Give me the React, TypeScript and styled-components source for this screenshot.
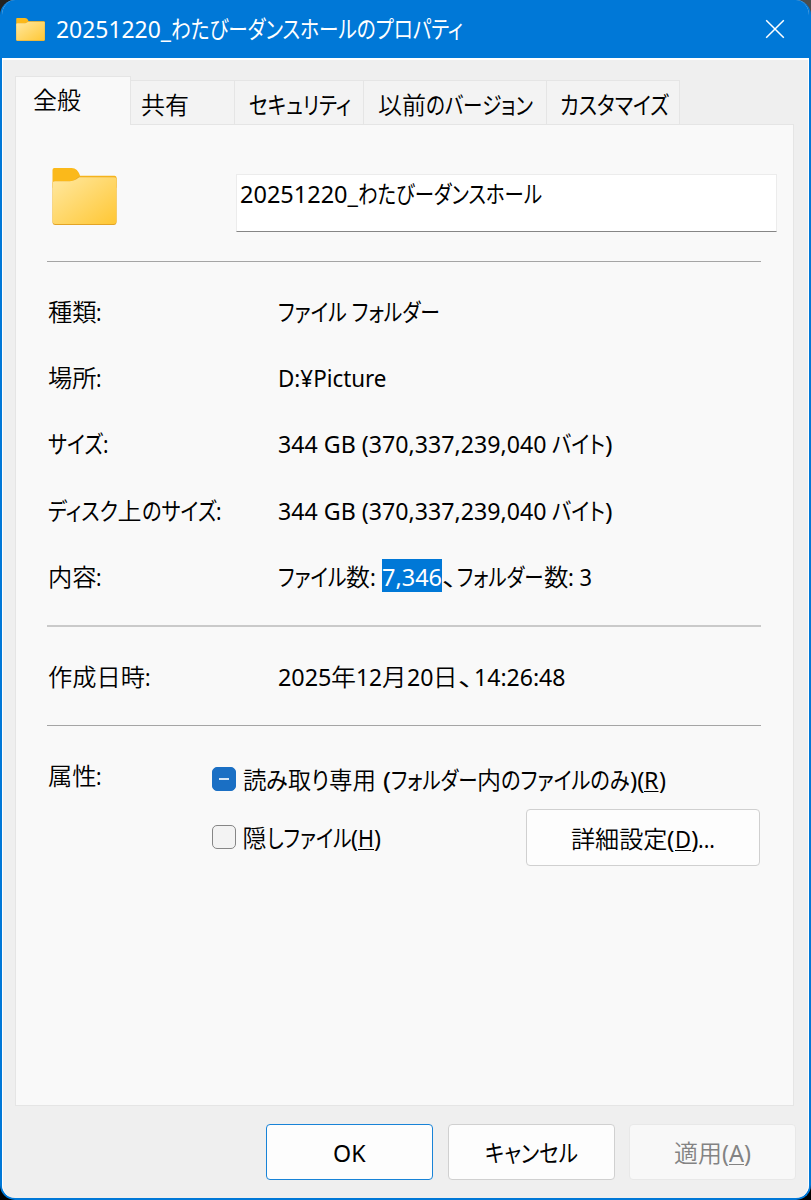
import React, { useLayoutEffect, useRef, useState } from "react";
import styled, { createGlobalStyle, css } from "styled-components";

const GlobalStyle = createGlobalStyle`
  * { box-sizing: border-box; }
  body {
    margin: 0;
    background:
      linear-gradient(to bottom, transparent 50%, #000 50%),
      linear-gradient(to right, #222 50%, #4c4c4c 50%);
    font-family: "Noto Sans", "Noto Sans CJK JP", sans-serif;
    font-size: 24px;
    line-height: 33px;
    color: #000;
  }
`;

/* ---------- text ---------- */

const RunBox = styled.span<{ $width: number; $selected?: boolean }>`
  display: inline-block;
  width: ${(p) => p.$width}px;
  height: 33px;
  line-height: 35px;
  vertical-align: top;
  white-space: pre;
  ${(p) => p.$selected && css`background: #0078d7; color: #fff;`}
`;

const RunText = styled.span<{ $regular: boolean; $underline?: boolean }>`
  display: inline-block;
  transform-origin: 0 50%;
  font-feature-settings: "palt";
  font-weight: ${(p) => (p.$regular ? 400 : 350)};
  ${(p) => p.$underline && css`
    text-decoration: underline;
    text-decoration-thickness: 1px;
    text-decoration-skip-ink: none;
    text-underline-offset: 2px;
  `}
`;

const Line = styled.span`
  display: inline-flex;
  height: 33px;
  white-space: pre;
`;

type Flag = "selected" | "underline";
type Segment = [text: string, width: number, flag?: Flag];

/* Condenses a stretch of text so that it takes up exactly the given advance. */
function Run({ text, width, flag }: { text: string; width: number; flag?: Flag }) {
  const ref = useRef<HTMLSpanElement>(null);
  const [scale, setScale] = useState(1);
  useLayoutEffect(() => {
    if (ref.current) {
      const style = getComputedStyle(ref.current);
      setScale(width / parseFloat(style.width));
    }
  }, [width, text]);
  return (
    <RunBox $width={width} $selected={flag === "selected"}>
      <RunText
        ref={ref}
        $regular={/^[\u0000-\u00ff\u3040-\u30ff]+$/.test(text)}
        $underline={flag === "underline"}
        style={{ transform: `scaleX(${scale})` }}
      >
        {text}
      </RunText>
    </RunBox>
  );
}

function Label({ parts }: { parts: Segment[] }) {
  return (
    <Line>
      {parts.map(([text, width, flag], i) => (
        <Run key={i} text={text} width={width} flag={flag} />
      ))}
    </Line>
  );
}

/* ---------- window ---------- */

const Window = styled.div`
  display: flex;
  flex-direction: column;
  width: 811px;
  height: 1200px;
  border: 2px solid #0078d7;
  border-top: 0;
  border-radius: 15px;
  background: #efefef;
  overflow: hidden;
`;

const TitleBar = styled.header`
  display: flex;
  align-items: center;
  height: 58px;
  flex: none;
  padding: 0 24px 0 14px;
  background: #0078d7;
  color: #fff;
`;

const TitleText = styled.div`
  flex: 1;
  height: 33px;
  margin: -3px 0 0 11px;
`;

const CloseButton = styled.button`
  display: flex;
  padding: 0;
  border: 0;
  background: none;
`;

const Body = styled.main`
  display: flex;
  flex-direction: column;
  flex: 1;
  padding: 16px 16px 0 12px;
  border: 1px solid #fff;
  border-width: 2px 1px 0;
  border-radius: 0 0 13px 13px;
`;

const Tabs = styled.nav`
  display: flex;
  align-items: flex-end;
  height: 48px;
  position: relative;
`;

const Tab = styled.div<{ $width: number; $indent: number; $active?: boolean }>`
  width: ${(p) => p.$width}px;
  height: 44px;
  padding: 6px 0 0 ${(p) => p.$indent}px;
  border: 1px solid #e5e5e5;
  border-width: 1px 1px 0 0;
  background: #f3f3f3;
  ${(p) => p.$active && css`
    height: 49px;
    padding-top: 5px;
    border-left-width: 1px;
    background: #f9f9f9;
    margin-bottom: -1px;
  `}
`;

const Panel = styled.section`
  height: 982px;
  width: 779px;
  padding: 0 16px 0 31px;
  border: 1px solid #e5e5e5;
  background: #f9f9f9;
`;

const NameRow = styled.div`
  display: flex;
  height: 136px;
  padding-top: 43px;
  padding-left: 5px;
`;

const NameInput = styled.div`
  width: 541px;
  height: 58px;
  margin: 6px 0 0 119px;
  padding: 1px 0 0 3px;
  border: 1px solid #ececec;
  border-bottom: 1px solid #868686;
  background: #fff;
`;

const Divider = styled.hr<{ $soft?: boolean }>`
  width: 714px;
  height: ${(p) => (p.$soft ? 2 : 1)}px;
  margin: 0;
  border: 0;
  background: ${(p) => (p.$soft ? "#cacaca" : "#a5a5a5")};
`;

const Fields = styled.dl<{ $top: number; $bottom: number }>`
  display: flex;
  flex-direction: column;
  gap: 33.3px;
  margin: 0;
  padding: ${(p) => p.$top}px 0 ${(p) => p.$bottom}px;
`;

const Field = styled.div`
  display: grid;
  grid-template-columns: 230px 1fr;
  height: 33px;
  padding-left: 0.5px;
`;

const Term = styled.dt`
  margin: 0;
`;

const Value = styled.dd`
  margin: 0;
`;

const Attributes = styled.div`
  display: grid;
  grid-template-columns: 164.5px 1fr;
  padding: 32px 0 0 0.5px;
`;

const Options = styled.div`
  display: flex;
  flex-direction: column;
  width: 548px;
  padding-top: 5px;
`;

const OptionRow = styled.div<{ $height: number }>`
  display: flex;
  align-items: center;
  justify-content: space-between;
  height: ${(p) => p.$height}px;
`;

const Option = styled.label`
  display: flex;
  align-items: center;
  gap: 6.5px;
  padding-bottom: 2px;
`;

const Box = styled.span<{ $mixed?: boolean }>`
  display: flex;
  align-items: center;
  justify-content: center;
  width: 24px;
  height: 24px;
  margin-top: 1px;
  border: 1.5px solid ${(p) => (p.$mixed ? "#1a6fc4" : "#868686")};
  border-radius: 5px;
  background: ${(p) => (p.$mixed ? "#1a6fc4" : "#f3f3f3")};
`;

const Dash = styled.span`
  width: 10px;
  height: 1.5px;
  background: #d6e6f6;
`;

const Button = styled.button<{ $width: number; $kind?: "primary" | "disabled" }>`
  display: flex;
  align-items: center;
  justify-content: center;
  width: ${(p) => p.$width}px;
  height: 57px;
  padding: 0;
  border: 1px solid #d0d0d0;
  border-radius: 4px;
  background: #fdfdfd;
  color: #000;
  font: inherit;
  ${(p) => p.$kind === "primary" && css`border-color: #1883d7;`}
  ${(p) => p.$kind === "disabled" && css`
    margin-left: -1px;
    border-color: #e8e8e8;
    background: #f8f8f8;
    color: #838383;
  `}
`;

const Footer = styled.footer`
  display: flex;
  justify-content: flex-end;
  gap: 15px;
  padding-top: 18px;
  margin-right: -4px;

  ${Button} {
    height: 56px;
    padding-bottom: 1px;
  }
`;

/* ---------- drawings ---------- */

function FolderIcon({ width, height, id }: { width: number; height: number; id: string }) {
  return (
    <svg width={width} height={height} viewBox="0 0 66 58" preserveAspectRatio="none">
      <defs>
        <linearGradient id={id} x1="0" y1="0" x2="1" y2="1">
          <stop offset="0" stopColor="#ffe8a0" />
          <stop offset="1" stopColor="#ffc734" />
        </linearGradient>
      </defs>
      <path d="M2.5 0H20C24 0 27 3 28.5 8H63.5Q65.5 8 65.5 10V20H.5V2Q.5 0 2.5 0Z" fill="#fbb91a" />
      <path d="M27 9H63.5Q65.5 9 65.5 11V55.5Q65.5 58 63 58H3Q.5 58 .5 55.5V16Q.5 13.5 3 13.5H18C23 13.5 25 10.5 27 9Z" fill="#e3a426" />
      <path d="M28 9.5H63.5Q65.5 9.5 65.5 11.5V54.5Q65.5 57 63 57H3Q.5 57 .5 54.5V16Q.5 13.5 3 13.5H18C23 13.5 25 11 28 9.5Z" fill={`url(#${id})`} />
    </svg>
  );
}

function CloseIcon() {
  return (
    <svg width="20" height="20" viewBox="0 0 20 20" fill="none" stroke="#fff" strokeWidth="1.5">
      <path d="M1.2 1.2L18.8 18.8M18.8 1.2L1.2 18.8" />
    </svg>
  );
}

/* ---------- content ---------- */

const tabs: { width: number; indent: number; parts: Segment[]; active?: boolean }[] = [
  { width: 116, indent: 17, parts: [["全般", 48]], active: true },
  { width: 104, indent: 10, parts: [["共有", 48]] },
  { width: 129, indent: 13.5, parts: [["セキュリティ", 102]] },
  { width: 183, indent: 14, parts: [["以前", 48], ["のバージョン", 107]] },
  { width: 133, indent: 13, parts: [["カスタマイズ", 109]] },
];

const sizeParts: Segment[] = [["344 GB (370,337,239,040 ", 274.5], ["バイト", 53], [")", 7.5]];

const fields: { term: Segment[]; value: Segment[] }[] = [
  { term: [["種類", 48.5], [":", 5.5]], value: [["ファイル フォルダー", 162]] },
  { term: [["場所", 48.5], [":", 5.5]], value: [["D:¥Picture", 108.5]] },
  { term: [["サイズ", 55], [":", 5.5]], value: sizeParts },
  { term: [["ディスク", 70], ["上", 24], ["のサイズ", 74.5], [":", 5.5]], value: sizeParts },
  {
    term: [["内容", 48.5], [":", 5.5]],
    value: [
      ["ファイル", 68.5], ["数", 24], [": ", 11.5], ["7,346", 60, "selected"], ["、", 15.5],
      ["フォルダー", 86.5], ["数", 24.5], [": 3", 24],
    ],
  },
];

const created: Segment[] = [
  ["2025", 53.5], ["年", 25], ["12", 26], ["月", 24.5], ["20", 26.5], ["日", 24.5], ["、", 16], ["14:26:48", 91.5],
];

const readOnly: Segment[] = [
  ["読", 23.5], ["み", 21.5], ["取", 23], ["り", 18], ["専用", 47], [" (", 15], ["フォルダー", 86.5],
  ["内", 24], ["のファイルのみ", 128.5], [")(", 14.5], ["R", 14.5, "underline"], [")", 7],
];

export default function App() {
  return (
    <>
      <GlobalStyle />
      <Window>
        <TitleBar>
          <FolderIcon width={29} height={23} id="folder-small" />
          <TitleText>
            <Label parts={[["20251220_", 115], ["わたびーダンスホールのプロパティ", 292]]} />
          </TitleText>
          <CloseButton aria-label="閉じる"><CloseIcon /></CloseButton>
        </TitleBar>
        <Body>
          <Tabs>
            {tabs.map((t, i) => (
              <Tab key={i} $width={t.width} $indent={t.indent} $active={t.active}>
                <Label parts={t.parts} />
              </Tab>
            ))}
          </Tabs>
          <Panel>
            <NameRow>
              <FolderIcon width={65} height={57} id="folder-large" />
              <NameInput>
                <Label parts={[["20251220_", 118], ["わたびーダンスホール", 184]]} />
              </NameInput>
            </NameRow>
            <Divider />
            <Fields $top={31.8} $bottom={33}>
              {fields.map((f, i) => (
                <Field key={i}>
                  <Term><Label parts={f.term} /></Term>
                  <Value><Label parts={f.value} /></Value>
                </Field>
              ))}
            </Fields>
            <Divider $soft />
            <Fields $top={32} $bottom={33}>
              <Field>
                <Term><Label parts={[["作成日時", 97], [":", 5.5]]} /></Term>
                <Value><Label parts={created} /></Value>
              </Field>
            </Fields>
            <Divider />
            <Attributes>
              <Label parts={[["属性", 48.5], [":", 5.5]]} />
              <Options>
                <OptionRow $height={33}>
                  <Option>
                    <Box $mixed><Dash /></Box>
                    <Label parts={readOnly} />
                  </Option>
                </OptionRow>
                <OptionRow $height={84}>
                  <Option>
                    <Box />
                    <Label parts={[["隠", 24], ["しファイル", 84.5], ["(", 7], ["H", 16, "underline"], [")", 7]]} />
                  </Option>
                  <Button $width={234}>
                    <Label parts={[["詳細設定", 96.5], ["(", 7.5], ["D", 16, "underline"], [")", 7.5], ["...", 17]]} />
                  </Button>
                </OptionRow>
              </Options>
            </Attributes>
          </Panel>
          <Footer>
            <Button $width={167} $kind="primary"><Label parts={[["OK", 32.5]]} /></Button>
            <Button $width={167}><Label parts={[["キャンセル", 93]]} /></Button>
            <Button $width={167} $kind="disabled">
              <Label parts={[["適用", 48], ["(", 7], ["A", 15, "underline"], [")", 7]]} />
            </Button>
          </Footer>
        </Body>
      </Window>
    </>
  );
}
